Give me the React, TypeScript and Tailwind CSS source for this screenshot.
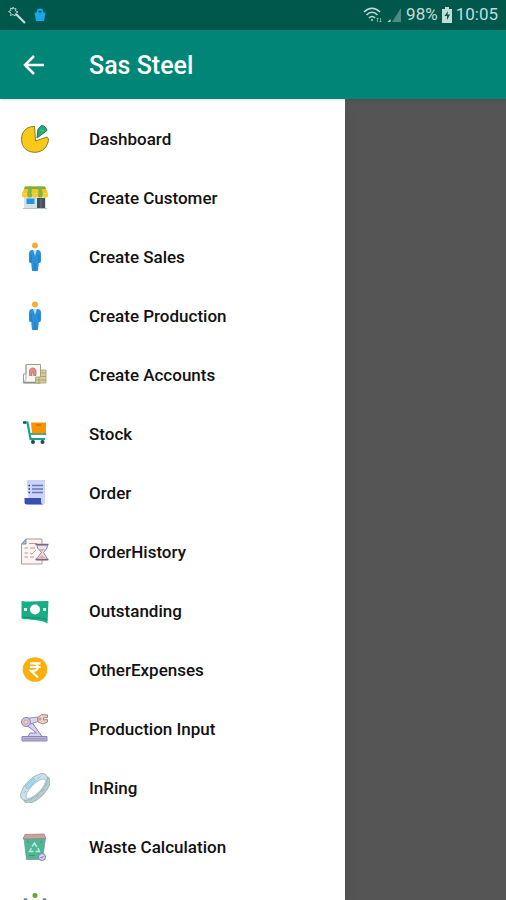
import type { ReactNode } from "react";

type MenuItem = {
  label: string;
  icon: ReactNode;
};

function IconFrame({ children }: { children: ReactNode }) {
  return (
    <svg viewBox="0 0 30 30" className="size-[30px] shrink-0" aria-hidden="true">
      {children}
    </svg>
  );
}

function PieIcon() {
  return (
    <IconFrame>
      <path d="M14.500 2.500C7 2 1.500 7.500 1.500 15.500c0 7.500 5.500 12.800 13.300 12.800 7.700 0 13.200-5.300 13.700-13.300L27 13l-11.500 4z" fill="#f8c916" stroke="#8a7a2c" strokeWidth="1" strokeLinejoin="round" />
      <path d="m17 14 1-9 3.500-3.500c2.500 0 5 2 5.500 5z" fill="#1fae72" stroke="#27795a" strokeWidth="1" strokeLinejoin="round" />
      <path d="m20 6 4 1" stroke="#5fc79b" strokeWidth="1" />
    </IconFrame>
  );
}

function StoreIcon() {
  return (
    <IconFrame>
      <path d="M4 11h22v14.500H4z" fill="#d9e1e8" />
      <path d="M5 3.500h20l3 7H2z" fill="#f4c522" />
      <path d="M5 3.500h20l.8 2.500H4.200z" fill="#6cb33f" />
      <path d="M9 3.500h3l-.7 8H7zM18 3.500h3l2 8h-4.300z" fill="#7cb342" />
      <path d="M2 10.500h5.200v1.500a2.600 2.600 0 0 1-5.200 0zM12.400 10.500h5.200v1.500a2.600 2.600 0 0 1-5.200 0zM22.800 10.500H28v1.500a2.600 2.600 0 0 1-5.200 0z" fill="#f9cd26" />
      <path d="M7.200 10.500h5.200v1.500a2.600 2.600 0 0 1-5.200 0zM17.600 10.500h5.200v1.500a2.600 2.600 0 0 1-5.200 0z" fill="#8fb431" />
      <path d="M6.500 15.500h8v5.500h-8z" fill="#2196e3" />
      <path d="M17 15h8v10.500h-8z" fill="#41525d" />
      <path d="M21 15.500v10" stroke="#768791" strokeWidth=".7" />
      <path d="M3 25.500h24" stroke="#b6c0c7" />
    </IconFrame>
  );
}

function PersonIcon() {
  return (
    <IconFrame>
      <circle cx="15" cy="3.500" r="3" fill="#f8ab3a" />
      <path d="M12.500 8h5c2.400 0 3.500 1.500 3.500 4v7c0 1.500-1.200 2.300-2.200 2l-.8 8h-6l-.8-8C9.700 21.300 9 20.500 9 19v-7c0-2.500 1.100-4 3.500-4" fill="#2b8fda" />
      <path d="m13 8 2 6 2-6z" fill="#b9e1f7" />
      <path d="M11.200 13v7m7.600-7v7M15 21v8" stroke="#1976bc" strokeWidth=".7" />
    </IconFrame>
  );
}

function AccountsIcon() {
  return (
    <IconFrame>
      <path d="M6 4.500h14.500V23H3.500v-9H6z" fill="#f8f7f2" stroke="#9a9c91" />
      <path d="M3.500 22.500h17" stroke="#8c9288" strokeWidth="1.500" />
      <path d="M6 5v14l-2 3.500" fill="none" stroke="#a5a79c" strokeWidth=".8" />
      <path d="M9.500 15.500V11c0-4 6.500-4 6.500 0v4.500h-2.500v-3h-1.500v3z" fill="#d88e8b" stroke="#bd6868" strokeWidth=".7" />
      <path d="M20.500 10H26v13H15.500v-6h5z" fill="#d5ce99" stroke="#a6a06d" strokeWidth=".8" />
      <path d="M20.500 13H26M16 20h10M19 23v-6M21 16.500h5" stroke="#989565" strokeWidth=".7" />
    </IconFrame>
  );
}

function CartIcon() {
  return (
    <IconFrame>
      <path d="M11 3.500h15V14H12z" fill="#f99500" />
      <path d="M16 6h5" stroke="#b36409" />
      <path d="M4 3.500h3.500l3 16.500H25" fill="none" stroke="#12a499" strokeWidth="2.200" />
      <path d="M9.500 15h16.800" stroke="#4f9a67" strokeWidth="1.800" />
      <path d="M3 3.500h3" stroke="#17474b" strokeWidth="2.200" />
      <path d="M12.500 20v3m10-3v3" stroke="#12a499" strokeWidth="1.500" />
      <circle cx="13" cy="23" r="2" fill="#254a4a" />
      <circle cx="22.500" cy="23" r="2" fill="#254a4a" />
    </IconFrame>
  );
}

function OrderIcon() {
  return (
    <IconFrame>
      <path d="M6.500 2H25v22a2.500 2.500 0 0 1-2.500 2.500H9z" fill="#cbd5f7" />
      <path d="M4.500 20H21v3.500a3 3 0 0 0 3 3H7a2.500 2.500 0 0 1-2.500-2.500z" fill="#3b4eb5" />
      <path d="M12 7.500h11M12 11h11M12 14.500h11" stroke="#6876bb" strokeWidth="1.500" />
      <path d="M8.500 7.500H10M8.500 11H10M8.500 14.500H10" stroke="#26398e" strokeWidth="1.500" />
    </IconFrame>
  );
}

function HistoryIcon() {
  return (
    <IconFrame>
      <path d="M6 2h16v25H1.500V7z" fill="#fbf4f2" stroke="#ad9996" />
      <path d="m2 7 4-5v5z" fill="#9ec3d9" stroke="#7d94a6" />
      <path d="M4.500 11H8m2 0h5m-10.500 5H8m2 0 2 1 4-4M4.500 20H8m2 0h4M9 6.500h8" fill="none" stroke="#b59a96" />
      <path d="m17 8 .5 3 4 4.500-5 6.500v1h11v-1l-4-6.500 3.500-4.500.5-3z" fill="#e4e3f4" stroke="#8d83ad" />
      <path d="M15.500 7.500h13M15.500 22.500h13" stroke="#7d6576" strokeWidth="1.500" />
      <path d="m19 12 3 2.500 3-2.500zM18.500 21l3.500-3 3.500 3z" fill="#e5ad8c" />
    </IconFrame>
  );
}

function MoneyIcon() {
  return (
    <IconFrame>
      <path d="M1.500 5c9 1.500 18-.5 27 0l-1 22.500c-8-5-17-2.500-26-5z" fill="#17ae85" />
      <path d="M3 21c8 1.500 16 0 24.500 2.500" fill="none" stroke="#108567" strokeWidth=".8" />
      <circle cx="15" cy="13.500" r="5" fill="#fff" />
      <path d="M4 12h3v3H4zM23 12h3v3h-3z" fill="#e5f7f0" />
    </IconFrame>
  );
}

function RupeeIcon() {
  return (
    <IconFrame>
      <circle cx="15" cy="14.500" r="12.300" fill="#fbaf0d" />
      <path d="M10 8.300h10.500M10 12h10.500M10 8.300h3.500c5.500 0 5.500 7.500 0 7.500H11l7 6.700" fill="none" stroke="#fff" strokeWidth="2.200" />
    </IconFrame>
  );
}

function RobotIcon() {
  return (
    <IconFrame>
      <path d="M8 22.500 10 19h6.500L5 10l6-3 11 15.500z" fill="#d5d1ef" stroke="#8a83b1" />
      <path d="m5.500 4.500 13-1.500 1 4-11 3.500z" fill="#dad5ed" stroke="#958cb8" />
      <circle cx="6" cy="8" r="4.500" fill="#d0c8e3" stroke="#8c83b2" />
      <circle cx="6" cy="8" r="2" fill="#f4dabb" stroke="#bb9a88" strokeWidth=".7" />
      <path d="m17.500 4 4-3.500 6 .5v2.500l-4 .3V6l4-.5V8l-4.500 2-5-2z" fill="#efd3c7" stroke="#9d857f" />
      <circle cx="20" cy="5" r="1.500" fill="#b9a0a8" />
      <path d="M2 22.500h25V27H2z" fill="#bdb8df" stroke="#8a83b1" />
      <path d="M3.500 24.800h22" stroke="#9089b8" />
    </IconFrame>
  );
}

function RingIcon() {
  return (
    <IconFrame>
      <g transform="rotate(-45 15 15)">
        <ellipse cx="15" cy="18" rx="17" ry="7.500" fill="#b7cdce" stroke="#8da7ab" strokeWidth=".8" />
        <ellipse cx="15" cy="13.500" rx="17" ry="8" fill="#cbe2eb" stroke="#91acb6" strokeWidth=".8" />
        <ellipse cx="15" cy="16" rx="13" ry="4.500" fill="#fff" stroke="#9cb5ba" strokeWidth=".7" />
        <path d="M9 7h12v3.500H9z" fill="#9edcf4" stroke="#76aec6" strokeWidth=".6" />
        <path d="M3 10.500h4m16 0h4M3 20.500h3m3 2h4m4 0h4m3-2h3" stroke="#8ba7b3" strokeWidth=".7" />
      </g>
    </IconFrame>
  );
}

function BinIcon() {
  return (
    <IconFrame>
      <path d="m4 6 2.500 21.500h16L25.500 6z" fill="#4db694" stroke="#7e9a90" strokeWidth=".8" />
      <path d="m5 2.500 19-.5 2 4.500-23 .5z" fill="#c7a39b" stroke="#a1847e" strokeWidth=".8" />
      <path d="m12 14.500 2.500-3.500 2.500 4m1 1 1.500 3.500h-4m-2 0h-4l2-3.500" fill="none" stroke="#b9eadb" strokeWidth="1.500" />
      <path d="M8 9v2m13-2v2M9 23.500h6" stroke="#369371" strokeWidth=".8" />
      <circle cx="22" cy="25" r="3.500" fill="#d4d0e8" stroke="#8980ad" />
      <path d="m20.500 25 1 1 2-2" fill="none" stroke="#7b71a0" />
    </IconFrame>
  );
}

function PeopleIcon() {
  return (
    <IconFrame>
      <circle cx="15" cy="4.500" r="2.500" fill="#65a82d" />
      <circle cx="5.500" cy="9" r="2" fill="#7b8794" />
      <circle cx="24.500" cy="9" r="2" fill="#7b8794" />
      <path d="M10 20v-5c0-7 10-7 10 0v5z" fill="#65a82d" />
      <path d="M2 20v-4c0-5 7-5 7 0v4zM21 20v-4c0-5 7-5 7 0v4z" fill="#7b8794" />
    </IconFrame>
  );
}

const menuItems: MenuItem[] = [
  { label: "Dashboard", icon: <PieIcon /> },
  { label: "Create Customer", icon: <StoreIcon /> },
  { label: "Create Sales", icon: <PersonIcon /> },
  { label: "Create Production", icon: <PersonIcon /> },
  { label: "Create Accounts", icon: <AccountsIcon /> },
  { label: "Stock", icon: <CartIcon /> },
  { label: "Order", icon: <OrderIcon /> },
  { label: "OrderHistory", icon: <HistoryIcon /> },
  { label: "Outstanding", icon: <MoneyIcon /> },
  { label: "OtherExpenses", icon: <RupeeIcon /> },
  { label: "Production Input", icon: <RobotIcon /> },
  { label: "InRing", icon: <RingIcon /> },
  { label: "Waste Calculation", icon: <BinIcon /> },
  { label: "Accountable", icon: <PeopleIcon /> },
];

function StatusBar() {
  return (
    <div className="flex h-[30px] shrink-0 items-center justify-between bg-[#00574b] px-2 text-[#c2dcd7]">
      <div className="flex items-center gap-2">
        <svg viewBox="0 0 18 18" className="size-[18px]" fill="none" stroke="currentColor" aria-hidden="true">
          <path d="m8 8 9 9" strokeWidth="2.200" />
          <path d="m5 1 1 2 2-.5-.5 2.500L10 6 7.500 7.500 7 10 5 8.500 2.500 9.500 3 7 .5 5.500 3 4.500 2.500 2l2 1z" strokeWidth=".9" />
        </svg>
        <svg viewBox="0 0 12 14" className="h-3.5 w-3" aria-hidden="true">
          <path d="M.5 4.500h11L10 13H2z" fill="#1aa6e8" />
          <path d="M3.500 5.500V4a2.500 2.500 0 0 1 5 0v1.500" fill="none" stroke="#1aa6e8" strokeWidth="1.800" />
        </svg>
      </div>
      <div className="flex items-center gap-1">
        <svg viewBox="0 0 20 16" className="h-4 w-5" fill="none" stroke="currentColor" strokeWidth="1.600" aria-hidden="true">
          <path d="M2 5c5-5 11-5 16 0M4.500 8c3.500-3.500 7.500-3.500 11 0M7 11c2-2 4-2 6 0" />
          <circle cx="10" cy="13" r="1" fill="currentColor" stroke="none" />
          <path d="M15.500 11v4m-1-3 1-1 1 1m2-1v4m-1-1 1 1 1-1" strokeWidth=".6" />
        </svg>
        <svg viewBox="0 0 16 16" className="size-4" aria-hidden="true">
          <path d="M15 1v14H6z" fill="#4b8c82" />
          <path d="M4.500 12v3h-3z" fill="currentColor" />
        </svg>
        <span className="text-[17px]">98%</span>
        <svg viewBox="0 0 10 16" className="h-4 w-2.5" aria-hidden="true">
          <path d="M3 0h4v2h3v14H0V2h3z" fill="currentColor" />
          <path d="M6 4 2.500 9H5v4l3-5.500H5.500z" fill="#00574b" />
        </svg>
        <span className="text-[17px]">10:05</span>
      </div>
    </div>
  );
}

export default function App() {
  return (
    <div className="flex h-screen flex-col overflow-hidden bg-[#555] font-['Roboto',sans-serif]">
      <StatusBar />
      <header className="relative flex h-[69px] shrink-0 items-center bg-[#008577] text-white shadow-sm">
        <button type="button" aria-label="Back" className="flex h-full w-[89px] items-center pl-[23px]">
          <svg viewBox="0 0 22 22" className="size-[22px]" fill="none" stroke="currentColor" strokeWidth="2.500" aria-hidden="true">
            <path d="M21 11H2M11 2 2 11l9 9" />
          </svg>
        </button>
        <h1 className="pt-0.5 text-[25px] font-medium leading-8">Sas Steel</h1>
      </header>
      <nav className="min-h-0 w-[68.2%] flex-1 overflow-hidden bg-white pt-2.5 shadow-lg" aria-label="Main menu">
        <ul>
          {menuItems.map(({ label, icon }) => (
            <li key={label}>
              <a href="#" className="flex h-[59px] items-center gap-[39px] pl-5 text-[17px] font-medium leading-6 text-[#111]">
                {icon}
                {label}
              </a>
            </li>
          ))}
        </ul>
      </nav>
    </div>
  );
}
